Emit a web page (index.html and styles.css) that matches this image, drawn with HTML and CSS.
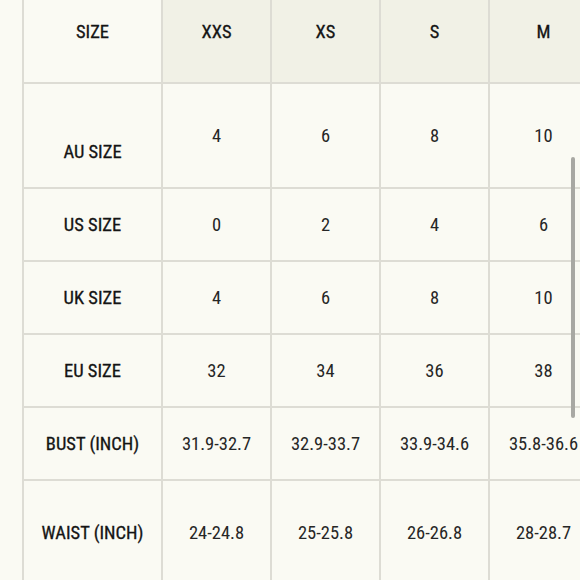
FILE: index.html
```html
<!DOCTYPE html>
<html lang="en">
<head>
<meta charset="utf-8">
<title>Size chart</title>
<link rel="stylesheet" href="styles.css">
</head>
<body>
<div class="chart">
  <table class="size-table">
    <colgroup>
      <col class="col-label">
      <col class="col-size">
      <col class="col-size">
      <col class="col-size">
      <col class="col-size">
    </colgroup>
    <thead>
      <tr class="row-head">
        <th class="label">SIZE</th>
        <th class="head">XXS</th>
        <th class="head">XS</th>
        <th class="head">S</th>
        <th class="head">M</th>
      </tr>
    </thead>
    <tbody>
      <tr class="row-tall">
        <th class="label label-low">AU SIZE</th>
        <td>4</td><td>6</td><td>8</td><td>10</td>
      </tr>
      <tr class="row">
        <th class="label">US SIZE</th>
        <td>0</td><td>2</td><td>4</td><td>6</td>
      </tr>
      <tr class="row">
        <th class="label">UK SIZE</th>
        <td>4</td><td>6</td><td>8</td><td>10</td>
      </tr>
      <tr class="row">
        <th class="label">EU SIZE</th>
        <td>32</td><td>34</td><td>36</td><td>38</td>
      </tr>
      <tr class="row">
        <th class="label">BUST (INCH)</th>
        <td>31.9-32.7</td><td>32.9-33.7</td><td>33.9-34.6</td><td>35.8-36.6</td>
      </tr>
      <tr class="row-tall">
        <th class="label">WAIST (INCH)</th>
        <td>24-24.8</td><td>25-25.8</td><td>26-26.8</td><td>28-28.7</td>
      </tr>
    </tbody>
  </table>
  <div class="scrollbar"></div>
</div>
</body>
</html>
```
FILE: styles.css
```css
html, body {
  margin: 0;
  padding: 0;
  width: 580px;
  height: 580px;
  overflow: hidden;
  background: #fafaf3;
}

.chart {
  position: relative;
  width: 580px;
  height: 580px;
  overflow: hidden;
  font-family: "Roboto Condensed", "Liberation Sans Narrow", "DejaVu Sans Condensed", sans-serif;
  color: #222222;
}

.size-table {
  margin-left: 22px;
  border-collapse: separate;
  border-spacing: 0;
  table-layout: fixed;
  width: 577px;
  font-size: 18.5px;
}

.col-label { width: 141px; }
.col-size { width: 109px; }

.size-table th,
.size-table td {
  box-sizing: border-box;
  border-right: 2px solid #dddcd4;
  border-bottom: 2px solid #dddcd4;
  text-align: center;
  vertical-align: middle;
  padding: 0;
  background: #fafaf3;
  white-space: nowrap;
}

.size-table th {
  font-weight: 400;
  color: #141414;
  -webkit-text-stroke: 0.3px #141414;
}
.size-table td { font-weight: 400; color: #262626; }

.size-table .label { border-left: 2px solid #dddcd4; }

.size-table .row-head th { height: 84px; padding-bottom: 19px; }
.size-table .head { background: #f1f1e6; }

.row-tall th, .row-tall td { height: 105px; }
.row th, .row td { height: 73px; }

.size-table .label-low { padding-top: 32px; }

.scrollbar {
  position: absolute;
  left: 571px;
  top: 157px;
  width: 4px;
  height: 261px;
  border-radius: 2px;
  background: #a8a8a3;
}
```
